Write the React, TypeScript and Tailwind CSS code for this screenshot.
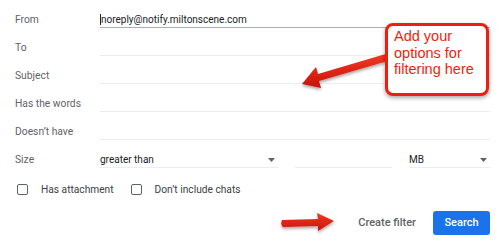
import React from 'react';

const rows = ['To', 'Subject', 'Has the words', "Doesn’t have"];

const Caret = () => (
  <svg width="7" height="4" viewBox="0 0 7 4" className="mr-[3px]">
    <path d="M0 0h7L3.5 4z" fill="#5f6368" />
  </svg>
);

const Checkbox: React.FC<{ label: string }> = ({ label }) => (
  <label className="flex items-center">
    <span className="w-[11px] h-[11px] border-[1.5px] border-[#5f6368] rounded-[2px] ml-[2px]" />
    <span className="ml-[13px] text-[10.2px] text-[#3c4043]">{label}</span>
  </label>
);

const Label: React.FC<{ children: React.ReactNode }> = ({ children }) => (
  <span className="w-[85px] h-[16px] leading-[16px] text-[10.3px] text-[#5f6368]">{children}</span>
);

export default function App() {
  return (
    <div
      className="relative w-[500px] h-[247px] bg-white overflow-hidden"
      style={{ fontFamily: 'Roboto, "Liberation Sans", sans-serif' }}
    >
      <div className="pl-[15px] pr-[10px]">
        <div className="flex items-end h-[28px]">
          <Label>From</Label>
          <div className="flex-1 h-[16px] border-b border-[#8ab4f8] text-[10px] leading-[15px] text-[#202124]">
            <span className="border-l border-[#202124]">noreply@notify.miltonscene.com</span>
          </div>
        </div>
        {rows.map((r) => (
          <div key={r} className="flex items-end h-[28px]">
            <Label>{r}</Label>
            <div className="flex-1 h-[16px] border-b border-[#eeeeee]" />
          </div>
        ))}
        <div className="flex items-end h-[28px]">
          <Label>Size</Label>
          <div className="w-[178px] h-[16px] border-b border-[#eeeeee] flex items-center justify-between text-[10px] text-[#202124]">
            <span>greater than</span>
            <Caret />
          </div>
          <div className="w-[97px] ml-[17px] h-[16px] border-b border-[#eeeeee]" />
          <div className="w-[81px] ml-[17px] h-[16px] border-b border-[#eeeeee] flex items-center justify-between text-[10px] text-[#202124]">
            <span>MB</span>
            <Caret />
          </div>
        </div>
        <div className="flex items-center gap-[15px] mt-[14px]">
          <Checkbox label="Has attachment" />
          <Checkbox label="Don’t include chats" />
        </div>
        <div className="flex items-center justify-end mt-[14px]">
          <button className="text-[11px] font-medium text-[#5f6368] mr-[17px]">Create filter</button>
          <button className="w-[57px] h-[24px] rounded-[3px] bg-[#1a73e8] text-white text-[11px] font-medium">
            Search
          </button>
        </div>
      </div>

      <svg className="absolute left-0 top-0 pointer-events-none" width="500" height="247">
        <defs>
          <linearGradient id="ar" x1="0" y1="0" x2="0" y2="1">
            <stop offset="0" stopColor="#f23a22" />
            <stop offset="1" stopColor="#c8120a" />
          </linearGradient>
          <filter id="sh" x="-20%" y="-20%" width="140%" height="160%">
            <feDropShadow dx="0" dy="2" stdDeviation="1.5" floodColor="#000" floodOpacity="0.35" />
          </filter>
        </defs>
        <g filter="url(#sh)">
          <path d="M389 53 L318 74 L316 67 L302 84 L321 88 L319 81 L391 60 Z" fill="url(#ar)" />
          <path d="M282 220 L318 219 L317 213 L334 221 L318 231 L318 226 L283 227 Q280 224 282 220 Z" fill="url(#ar)" />
        </g>
      </svg>

      <div
        className="absolute left-[385px] top-[23px] w-[104px] h-[73px] rounded-[8px] border-[3px] border-[#f01e0e] bg-white shadow-[0_2px_4px_rgba(0,0,0,0.35)] pl-[6px] pt-[2px] text-[14.5px] leading-[16.5px] text-[#f01e0e]"
        style={{ fontFamily: '"Liberation Sans", Arial, sans-serif' }}
      >
        Add your
        <br />
        options for
        <br />
        filtering here
      </div>
    </div>
  );
}
